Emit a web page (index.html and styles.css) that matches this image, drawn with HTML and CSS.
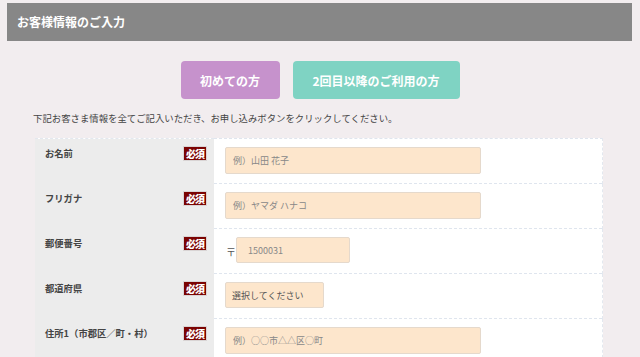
FILE: index.html
```html
<!DOCTYPE html>
<html lang="ja">
<head>
    <meta charset="UTF-8">
    <meta name="viewport" content="width=device-width, initial-scale=1.0">
    <title>お客様情報のご入力</title>
    <link rel="stylesheet" href="styles.css">
</head>
<body>
    <div class="page">
        <h2 class="heading">お客様情報のご入力</h2>

        <!-- 初回・2回目以降の切り替え -->
        <div class="entry-type">
            <button type="button" class="btn btn-first">初めての方</button>
            <button type="button" class="btn btn-repeat">2回目以降のご利用の方</button>
        </div>

        <p class="lead">下記お客さま情報を全てご記入いただき、お申し込みボタンをクリックしてください。</p>

        <!-- 入力フォーム -->
        <table class="form-table">
            <tr>
                <th><div class="label-cell"><span>お名前</span><span class="required">必須</span></div></th>
                <td><input type="text" class="field field-wide" placeholder="例）山田 花子"></td>
            </tr>
            <tr>
                <th><div class="label-cell"><span>フリガナ</span><span class="required">必須</span></div></th>
                <td><input type="text" class="field field-wide" placeholder="例）ヤマダ ハナコ"></td>
            </tr>
            <tr>
                <th><div class="label-cell"><span>郵便番号</span><span class="required">必須</span></div></th>
                <td><span class="zip-mark">〒</span><input type="text" class="field field-zip" placeholder="1500031"></td>
            </tr>
            <tr>
                <th><div class="label-cell"><span>都道府県</span><span class="required">必須</span></div></th>
                <td><div class="field field-select">選択してください</div></td>
            </tr>
            <tr>
                <th><div class="label-cell"><span>住所1（市郡区／町・村）</span><span class="required">必須</span></div></th>
                <td><input type="text" class="field field-wide" placeholder="例）○○市△△区○町"></td>
            </tr>
        </table>
    </div>
</body>
</html>
```

FILE: styles.css
```css
/* 全体 */
body {
    margin: 0;
    background-color: #f2edef;
    font-family: "Noto Sans CJK JP", "Noto Sans", sans-serif;
    color: #444;
}

.page {
    padding: 3px 8px 0 7px;
}

/* 見出し */
.heading {
    margin: 0;
    height: 38px;
    line-height: 37px;
    padding-left: 10px;
    background-color: #878787;
    color: #fff;
    font-size: 12px;
    font-weight: bold;
}

/* ボタン */
.entry-type {
    display: flex;
    justify-content: center;
    gap: 13px;
    margin-top: 20px;
    padding-left: 1px;
}

.btn {
    height: 38px;
    border: none;
    border-radius: 4px;
    color: #fff;
    font-family: inherit;
    font-size: 12px;
    font-weight: bold;
    padding: 0;
    cursor: pointer;
}

.btn-first {
    width: 99px;
    background-color: #c692cc;
}

.btn-repeat {
    width: 167px;
    background-color: #7fd3c3;
}

.lead {
    margin: 11px 0 0 26px;
    font-size: 9.4px;
    line-height: 16px;
    color: #444;
}

/* フォームテーブル */
.form-table {
    margin: 12px 0 0 28px;
    width: 568px;
    border-collapse: collapse;
    background-color: #fff;
}

.form-table tr {
    height: 44px;
}

.form-table th,
.form-table td {
    vertical-align: top;
    padding: 0;
}

.form-table td {
    border-top: 1px dashed #dfe5ee;
    border-right: 1px dashed #e3e8ef;
    padding: 8px 11px 0 11px;
    height: 36px;
}

.form-table tr:first-child th {
    border-top: 1px dashed #e3e8ef;
}

.form-table th {
    width: 179px;
    background-color: #ececec;
    text-align: left;
    font-size: 9.3px;
    font-weight: bold;
    color: #444;
}

.label-cell {
    display: flex;
    justify-content: space-between;
    align-items: flex-start;
    padding: 7px 7px 0 10px;
    line-height: 14px;
}

.required {
    display: inline-block;
    width: 22px;
    height: 13px;
    line-height: 13px;
    text-align: center;
    background-color: #7a0302;
    border: 1px solid #d9d4d4;
    color: #fff;
    font-size: 10px;
    font-weight: 900;
    letter-spacing: -1px;
}

/* 入力欄 */
.field {
    box-sizing: border-box;
    height: 27px;
    border: 1px solid #e5d9cc;
    border-radius: 2px;
    background-color: #fde6cc;
    padding: 0 7px;
    font-family: inherit;
    font-size: 9px;
    color: #555;
    vertical-align: top;
}

.field::placeholder {
    color: #888;
}

.field-wide {
    width: 256px;
}

.field-zip {
    width: 114px;
    height: 26px;
    padding-left: 11px;
}

.zip-mark {
    display: inline-block;
    width: 10px;
    padding-left: 1px;
    line-height: 26px;
    font-size: 10px;
    color: #555;
}

.field-select {
    display: inline-block;
    width: 99px;
    height: 26px;
    line-height: 25px;
    padding: 0 6px;
}
```
